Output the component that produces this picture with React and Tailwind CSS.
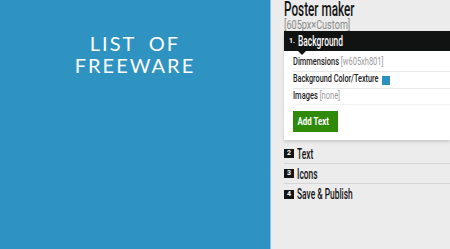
import React from "react";

function C({ s, className = "", children }) {
  return (
    <span className={`inline-block origin-left whitespace-nowrap ${s} ${className}`}>{children}</span>
  );
}

function Num({ n }) {
  return (
    <span className="inline-flex h-[9px] w-[10px] shrink-0 items-center justify-center bg-[#151515] text-[7px] font-bold leading-none text-white">
      {n}
    </span>
  );
}

export default function App() {
  return (
    <div className="flex h-[249px] w-[450px] overflow-hidden" style={{ fontFamily: 'Roboto, "Liberation Sans", sans-serif' }}>
      <div className="flex h-full w-[270px] shrink-0 flex-col items-center bg-[#2e93c0] pt-[32px]">
        <div
          className="text-center text-[20px] leading-[22px] tracking-[2px] text-white"
          style={{ fontFamily: 'Lato, "Open Sans", sans-serif' }}
        >
          <div className="[word-spacing:6px]">LIST OF</div>
          <div>FREEWARE</div>
        </div>
      </div>
      <div className="flex h-full flex-1 flex-col border-l border-[#8cc4e0] bg-[#ebeceb] pl-[13px]">
        <div className="h-[18px] text-[21px] font-medium leading-[18px] text-[#151515]">
          <C s="scale-x-[0.56]">Poster maker</C>
        </div>
        <div className="h-[13px] text-[13px] leading-[13px] text-[#8a8a8a]">
          <C s="scale-x-[0.7]">[605px×Custom]</C>
        </div>
        <div className="bg-white shadow-[0_2px_3px_rgba(0,0,0,0.15)]">
          <div className="relative flex h-[20px] items-center bg-[#111312] pl-[5px] text-white">
            <span className="w-[9px] text-[7px] font-bold">1.</span>
            <span className="text-[14px] font-medium">
              <C s="scale-x-[0.6]">Background</C>
            </span>
            <span className="absolute left-[14px] top-[20px] h-0 w-0 border-x-[4px] border-t-[4px] border-x-transparent border-t-[#111312]" />
          </div>
          <div className="pl-[9px] text-[11px] leading-[11px] text-[#222]">
            <div className="flex h-[21px] items-end border-b border-[#e8e8e8] pb-[4px]">
              <C s="scale-x-[0.68]">
                <span className="font-medium">Dimmensions</span> <span className="text-[#9a9a9a]">[w605xh801]</span>
              </C>
            </div>
            <div className="relative flex h-[17px] items-end border-b border-[#e8e8e8] pb-[4px]">
              <C s="scale-x-[0.66]" className="font-medium">Background Color/Texture</C>
              <span className="absolute left-[89px] top-[4px] h-[9px] w-[8px] bg-[#2f8fc0]" />
            </div>
            <div className="flex h-[16px] items-end border-b border-[#f2f2f2] pb-[3px]">
              <C s="scale-x-[0.68]">
                <span className="font-medium">Images</span> <span className="text-[#9a9a9a]">[none]</span>
              </C>
            </div>
            <div className="pb-[8px] pt-[6px]">
              <button className="flex h-[21px] w-[45px] items-center justify-center bg-[#2f8a0a] text-[11px] font-bold text-white">
                <C s="scale-x-[0.72]" className="w-[40px] pl-[2px]">Add Text</C>
              </button>
            </div>
          </div>
        </div>
        <div className="mt-[4px] text-[14px] font-medium leading-[14px] text-[#151515]">
          <div className="flex h-[20px] items-center gap-[3px] border-b border-[#d6d6d6]">
            <Num n="2" />
            <C s="scale-x-[0.6]">Text</C>
          </div>
          <div className="flex h-[20px] items-center gap-[3px] border-b border-[#d6d6d6]">
            <Num n="3" />
            <C s="scale-x-[0.6]">Icons</C>
          </div>
          <div className="flex h-[20px] items-center gap-[3px]">
            <Num n="4" />
            <C s="scale-x-[0.6]">Save &amp; Publish</C>
          </div>
        </div>
      </div>
    </div>
  );
}
